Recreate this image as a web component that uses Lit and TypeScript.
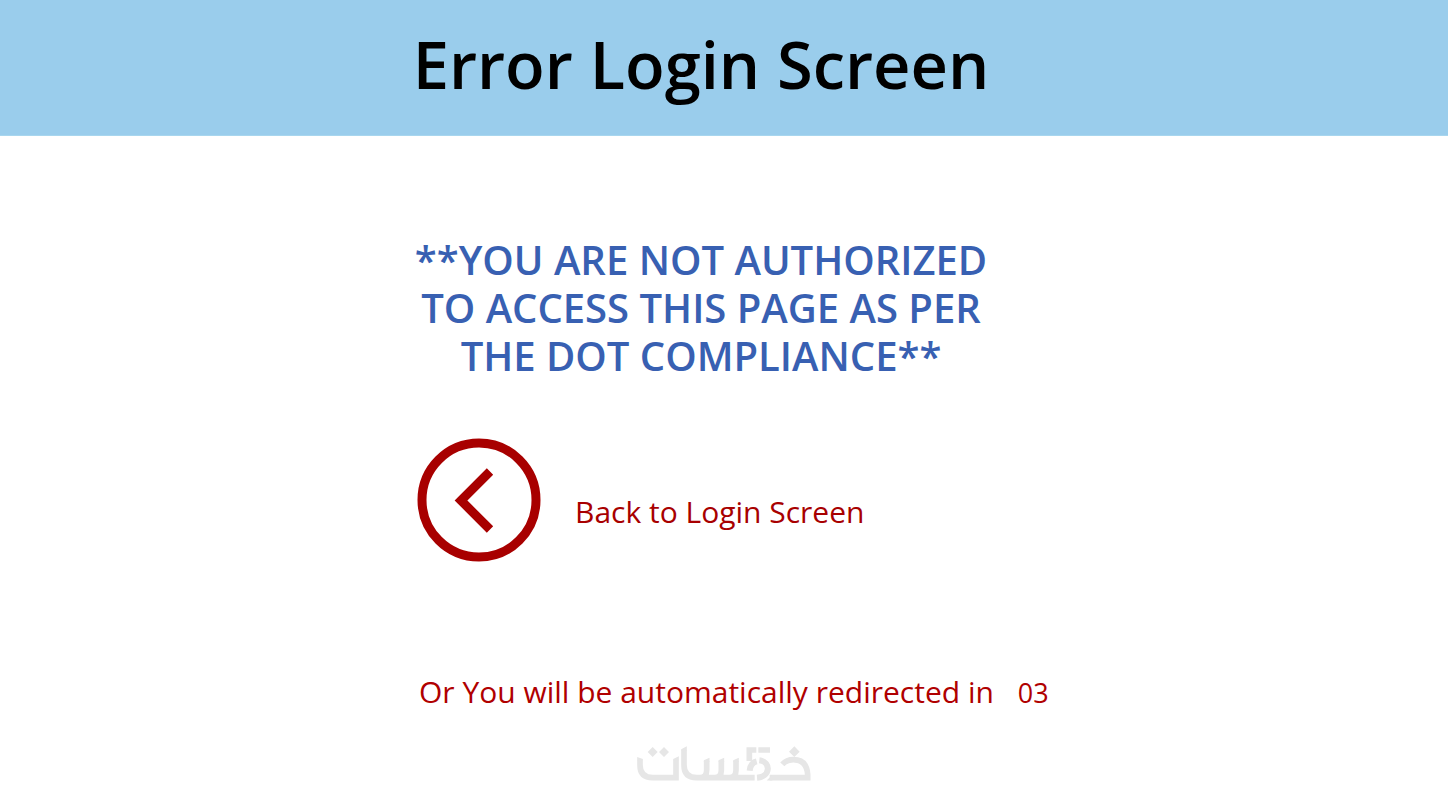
import { LitElement, html, css } from "lit";
import { customElement, property } from "lit/decorators.js";

@customElement("app-root")
export class AppRoot extends LitElement {
  @property({ type: Number }) seconds = 3;

  static styles = css`
    :host {
      display: block;
      background: #fff;
      font-family: "Open Sans", "Noto Sans", sans-serif;
    }
    .banner {
      display: flex;
      justify-content: center;
      align-items: center;
      box-sizing: border-box;
      height: 136px;
      padding: 0 46px 7px 0;
      background: #9acdec;
      border-bottom: 1px solid #a8d6ee;
    }
    h1 {
      margin: 0;
      font-size: 65px;
      font-weight: 600;
      line-height: 88px;
      color: #000;
    }
    main {
      display: flex;
      justify-content: center;
      padding: 100px 46px 0 0;
    }
    .column {
      display: flex;
      flex-direction: column;
      width: 580px;
    }
    .message {
      margin: 0;
      font-size: 40px;
      font-weight: 600;
      line-height: 48px;
      text-align: center;
      color: #3860b2;
    }
    .back {
      display: flex;
      align-items: center;
      gap: 34px;
      margin-top: 58px;
      padding-left: 6px;
      font-size: 30px;
      line-height: 40px;
      color: #a80000;
      text-decoration: none;
    }
    .back svg {
      display: block;
      width: 124px;
      height: 124px;
    }
    .back span {
      padding-top: 24px;
    }
    .redirect {
      display: flex;
      align-items: baseline;
      gap: 24px;
      margin: 110px 0 0;
      padding-left: 8px;
      font-size: 30px;
      line-height: 40px;
      white-space: nowrap;
      color: #b00000;
    }
    .count {
      font-size: 27px;
    }
    footer {
      display: flex;
      justify-content: center;
      padding-top: 33px;
    }
    .mark {
      display: block;
      width: 174px;
      height: 35px;
    }
  `;

  render() {
    return html`
      <header class="banner"><h1>Error Login Screen</h1></header>
      <main>
        <div class="column">
          <p class="message">**YOU ARE NOT AUTHORIZED TO ACCESS THIS PAGE AS PER THE DOT COMPLIANCE**</p>
          <a class="back" href="#login">
            <svg viewBox="0 0 124 124" fill="none" stroke="#a80000" stroke-width="9" aria-hidden="true">
              <circle cx="62" cy="62" r="57" />
              <path d="M73 33.500 44 62.500 73 91.500" />
            </svg>
            <span>Back to Login Screen</span>
          </a>
          <p class="redirect">
            <span>Or You will be automatically redirected in</span>
            <span class="count">${String(this.seconds).padStart(2, "0")}</span>
          </p>
        </div>
      </main>
      <footer>
        <svg class="mark" viewBox="51 47 522 105" role="img" aria-label="خمسات" fill="none" stroke="#e6e6e6" stroke-width="17">
          <path d="M60 88V104Q60 142 98 142H168V88" />
          <path d="M192 60V104Q192 142 230 142H404M260 92V120Q260 142 240 142M304 92V120Q304 142 284 142M348 92V120Q348 142 328 142" />
          <path d="M51.500 80 68.500 86V90H51.500ZM159.500 86 176.500 78V90H159.500ZM183.500 57 200.500 48V62H183.500ZM251.500 90 268.500 82V94H251.500ZM295.500 90 312.500 82V94H295.500ZM339.500 90 356.500 82V94H339.500Z" fill="#e6e6e6" stroke="none" />
          <path d="M388 92V59H409M415 59H450" />
          <path d="M389 121Q391 98 410 93M418 90C453 94 453 139 411 142" stroke-width="18" />
          <path d="M449 142H563V132Q560 88 520 88Q500 88 487 102" />
          <path d="M98 50 113 65 98 80 83 65ZM132 50 147 65 132 80 117 65ZM523 48 539 64 523 80 507 64ZM440 150.500 457 133.500V150.500Z" fill="#e6e6e6" stroke="none" />
        </svg>
      </footer>
    `;
  }
}
